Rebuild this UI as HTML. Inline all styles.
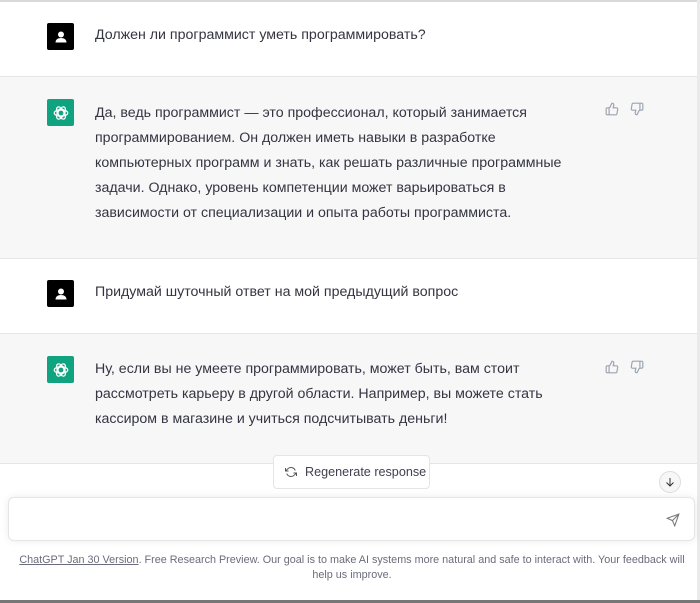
<!DOCTYPE html>
<html><head><meta charset="utf-8"><style>
*{margin:0;padding:0;box-sizing:border-box}
body{width:700px;height:603px;overflow:hidden;background:#fff;font-family:"Liberation Sans","DejaVu Sans",sans-serif;color:#374151;position:relative}
.row{position:absolute;left:0;width:697px;border-bottom:1px solid #e5e5e5}
.u{background:#fff}.a{background:#f7f7f8}
.av{position:absolute;left:47px;width:27px;height:27px;border-radius:2px;display:flex;align-items:center;justify-content:center}
.txt{position:absolute;left:95px;width:480px;font-size:14.2px;line-height:25px;color:#343541}
.th{position:absolute;top:0}
</style></head><body>
<div style="position:absolute;left:0;top:0;width:700px;height:2px;background:#d9d9d9"></div>
<div style="position:absolute;right:0;top:0;width:3px;height:603px;background:#eaeaea"></div>

<div class="row u" style="top:2px;height:75px">
<div class="av" style="top:21px;background:#000"><svg width="14" height="14" viewBox="0 0 14 14"><circle cx="7" cy="4.5" r="3" fill="#fff"/><path d="M1.5 12.5c0-3 2.5-4.5 5.5-4.5s5.5 1.5 5.5 4.5z" fill="#fff"/></svg></div>
<div class="txt" style="top:21px">Должен ли программист уметь программировать?</div>
</div>

<div class="row a" style="top:77px;height:182px">
<div class="av" style="top:22px;background:#10a37f"><svg width="18" height="18" viewBox="0 0 24 24" fill="none" stroke="#fff" stroke-width="1.6"><circle cx="12" cy="12" r="4"/><ellipse cx="12" cy="12" rx="9" ry="4.5" transform="rotate(60 12 12)"/><ellipse cx="12" cy="12" rx="9" ry="4.5" transform="rotate(-60 12 12)"/><ellipse cx="12" cy="12" rx="9" ry="4.5"/></svg></div>
<div class="txt" style="top:24px">Да, ведь программист — это профессионал, который занимается программированием. Он должен иметь навыки в разработке компьютерных программ и знать, как решать различные программные задачи. Однако, уровень компетенции может варьироваться в зависимости от специализации и опыта работы программиста.</div>
<svg class="th" style="left:605px;top:25px" width="14" height="14" viewBox="0 0 24 24" fill="none" stroke="#9ca3af" stroke-width="2"><path d="M7 10v12M15 5.9L14 10h5.8a2 2 0 012 2.3l-1.4 8A2 2 0 0118.5 22H4a2 2 0 01-2-2v-8a2 2 0 012-2h2.8a2 2 0 001.8-1.1L12 2a3 3 0 013 3.9z"/></svg>
<svg class="th" style="left:630px;top:25px" width="14" height="14" viewBox="0 0 24 24" fill="none" stroke="#9ca3af" stroke-width="2"><path d="M17 14V2M9 18.1L10 14H4.2a2 2 0 01-2-2.3l1.4-8A2 2 0 015.5 2H20a2 2 0 012 2v8a2 2 0 01-2 2h-2.8a2 2 0 00-1.8 1.1L12 22a3 3 0 01-3-3.9z"/></svg>
</div>

<div class="row u" style="top:259px;height:75px">
<div class="av" style="top:21px;background:#000"><svg width="14" height="14" viewBox="0 0 14 14"><circle cx="7" cy="4.5" r="3" fill="#fff"/><path d="M1.5 12.5c0-3 2.5-4.5 5.5-4.5s5.5 1.5 5.5 4.5z" fill="#fff"/></svg></div>
<div class="txt" style="top:21px">Придумай шуточный ответ на мой предыдущий вопрос</div>
</div>

<div class="row a" style="top:334px;height:130px">
<div class="av" style="top:22px;background:#10a37f"><svg width="18" height="18" viewBox="0 0 24 24" fill="none" stroke="#fff" stroke-width="1.6"><circle cx="12" cy="12" r="4"/><ellipse cx="12" cy="12" rx="9" ry="4.5" transform="rotate(60 12 12)"/><ellipse cx="12" cy="12" rx="9" ry="4.5" transform="rotate(-60 12 12)"/><ellipse cx="12" cy="12" rx="9" ry="4.5"/></svg></div>
<div class="txt" style="top:23px">Ну, если вы не умеете программировать, может быть, вам стоит рассмотреть карьеру в другой области. Например, вы можете стать кассиром в магазине и учиться подсчитывать деньги!</div>
<svg class="th" style="left:605px;top:26px" width="14" height="14" viewBox="0 0 24 24" fill="none" stroke="#9ca3af" stroke-width="2"><path d="M7 10v12M15 5.9L14 10h5.8a2 2 0 012 2.3l-1.4 8A2 2 0 0118.5 22H4a2 2 0 01-2-2v-8a2 2 0 012-2h2.8a2 2 0 001.8-1.1L12 2a3 3 0 013 3.9z"/></svg>
<svg class="th" style="left:630px;top:26px" width="14" height="14" viewBox="0 0 24 24" fill="none" stroke="#9ca3af" stroke-width="2"><path d="M17 14V2M9 18.1L10 14H4.2a2 2 0 01-2-2.3l1.4-8A2 2 0 015.5 2H20a2 2 0 012 2v8a2 2 0 01-2 2h-2.8a2 2 0 00-1.8 1.1L12 22a3 3 0 01-3-3.9z"/></svg>
</div>

<div style="position:absolute;left:273px;top:455px;width:157px;height:34px;background:#fff;border:1px solid #e5e5e5;border-radius:4px;font-size:12.6px;color:#40414f;display:flex;align-items:center;padding-left:11px;white-space:nowrap">
<svg width="12" height="12" viewBox="0 0 24 24" fill="none" stroke="#555" stroke-width="2" style="margin-right:8px;flex:none"><path d="M1 4v6h6M23 20v-6h-6"/><path d="M20.5 9A9 9 0 005.6 5.6L1 10m22 4l-4.6 4.4A9 9 0 013.5 15"/></svg>Regenerate response</div>

<div style="position:absolute;left:659px;top:471px;width:22px;height:22px;border-radius:50%;border:1px solid #ddd;background:#f7f7f8;display:flex;align-items:center;justify-content:center"><svg width="12" height="12" viewBox="0 0 24 24" fill="none" stroke="#333" stroke-width="2"><path d="M12 4v16M5 13l7 7 7-7"/></svg></div>

<div style="position:absolute;left:8px;top:497px;width:687px;height:44px;background:#fff;border:1px solid #e5e5e5;border-radius:6px;box-shadow:0 0 8px rgba(0,0,0,.08)">
<svg style="position:absolute;right:14px;top:15px" width="14" height="14" viewBox="0 0 24 24" fill="none" stroke="#777" stroke-width="1.8"><path d="M22 2L11 13M22 2l-7 20-4-9-9-4z"/></svg></div>

<div style="position:absolute;left:14px;top:553px;width:676px;text-align:center;font-size:10.8px;line-height:15px;color:#6b6c7b"><span style="text-decoration:underline">ChatGPT Jan 30 Version</span>. Free Research Preview. Our goal is to make AI systems more natural and safe to interact with. Your feedback will help us improve.</div>
<div style="position:absolute;left:0;top:600px;width:700px;height:3px;background:#777"></div>
</body></html>
